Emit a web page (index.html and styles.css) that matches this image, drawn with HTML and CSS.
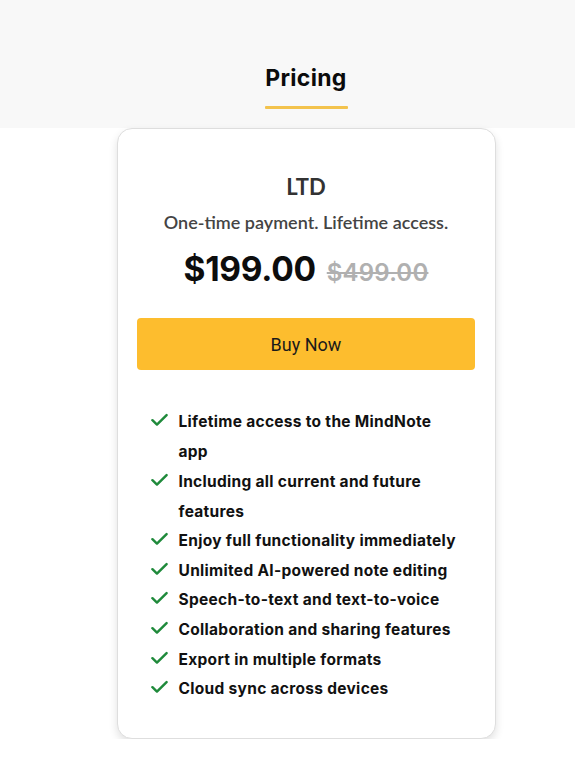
FILE: index.html
```html
<!DOCTYPE html>
<html lang="en">
<head>
<meta charset="utf-8">
<link rel="stylesheet" href="styles.css">
</head>
<body>
<section class="pricing">
  <div class="band">
    <h2 class="title">Pricing</h2>
    <div class="rule"></div>
  </div>
  <div class="card">
    <h3 class="plan">LTD</h3>
    <p class="sub">One-time payment. Lifetime access.</p>
    <div class="price"><span class="now">$199.00</span><span class="was">$499.00</span></div>
    <button class="buy">Buy Now</button>
    <ul class="features">
      <li><svg viewBox="0 0 18 14" class="chk"><path d="M1.5 7.2 L6.3 11.8 L16.5 1.8"/></svg><span>Lifetime access to the MindNote app</span></li>
      <li><svg viewBox="0 0 18 14" class="chk"><path d="M1.5 7.2 L6.3 11.8 L16.5 1.8"/></svg><span>Including all current and future features</span></li>
      <li><svg viewBox="0 0 18 14" class="chk"><path d="M1.5 7.2 L6.3 11.8 L16.5 1.8"/></svg><span>Enjoy full functionality immediately</span></li>
      <li><svg viewBox="0 0 18 14" class="chk"><path d="M1.5 7.2 L6.3 11.8 L16.5 1.8"/></svg><span>Unlimited AI-powered note editing</span></li>
      <li><svg viewBox="0 0 18 14" class="chk"><path d="M1.5 7.2 L6.3 11.8 L16.5 1.8"/></svg><span>Speech-to-text and text-to-voice</span></li>
      <li><svg viewBox="0 0 18 14" class="chk"><path d="M1.5 7.2 L6.3 11.8 L16.5 1.8"/></svg><span>Collaboration and sharing features</span></li>
      <li><svg viewBox="0 0 18 14" class="chk"><path d="M1.5 7.2 L6.3 11.8 L16.5 1.8"/></svg><span>Export in multiple formats</span></li>
      <li><svg viewBox="0 0 18 14" class="chk"><path d="M1.5 7.2 L6.3 11.8 L16.5 1.8"/></svg><span>Cloud sync across devices</span></li>
    </ul>
  </div>
</section>
</body>
</html>
```
FILE: styles.css
```css
* { box-sizing: border-box; }
html, body { margin: 0; padding: 0; background: #fff; }
body { font-family: Inter, "Liberation Sans", sans-serif; color: #111; }
.pricing { display: flex; flex-direction: column; align-items: center; }
.band {
  width: 100%;
  background: #f8f8f8;
  height: 128px;
  display: flex; flex-direction: column; align-items: center;
  padding-top: 62px;
  padding-left: 37px;
}
.title {
  margin: 0;
  font-size: 23px; font-weight: 700; line-height: 32px;
  color: #0b0b0b; letter-spacing: 0.3px;
}
.rule { width: 83px; height: 3px; background: #f3c34d; margin-top: 12px; border-radius: 1px; }
.card {
  width: 379px;
  margin-left: 37px;
  margin-top: 0;
  background: #fff;
  border: 1px solid #dedede;
  border-radius: 15px;
  box-shadow: 0 4px 9px rgba(0,0,0,0.12);
  padding: 44px 20px 34px;
  display: flex; flex-direction: column; align-items: center;
}
.plan {
  margin: 0; font-family: Lato, sans-serif; font-weight: 700;
  font-size: 22px; line-height: 28px; color: #333;
}
.sub {
  margin: 10px 0 0; font-family: Lato, sans-serif; font-weight: 600;
  font-size: 18px; line-height: 22px; color: #444;
}
.price { margin-top: 14px; display: flex; align-items: baseline; gap: 11px; line-height: 44px; }
.now { font-size: 33.5px; font-weight: 700; color: #0d0d0d; letter-spacing: -0.3px; }
.was { font-size: 24px; font-weight: 600; color: #b0b0b0; text-decoration: line-through; text-decoration-thickness: 2px; letter-spacing: 0.2px; }
.buy {
  margin-top: 23px;
  width: 338px; height: 52px;
  border: none; border-radius: 4px;
  background: #fdbd2e;
  font-family: Roboto, sans-serif; font-size: 18px; color: #1a1a1a;
  cursor: pointer;
}
.features {
  list-style: none; margin: 37px 0 0; padding: 0;
  width: 312px; align-self: flex-start; margin-left: 13px;
}
.features li {
  display: flex; align-items: flex-start; gap: 11px;
  font-size: 15.5px; font-weight: 700; line-height: 30px; color: #111;
  letter-spacing: 0.3px;
  margin-bottom: -0.4px;
}
.chk { width: 17px; height: 14px; flex: none; margin-top: 6px; fill: none; stroke: #1f8a3b; stroke-width: 2.6; stroke-linecap: round; stroke-linejoin: round; }
```
